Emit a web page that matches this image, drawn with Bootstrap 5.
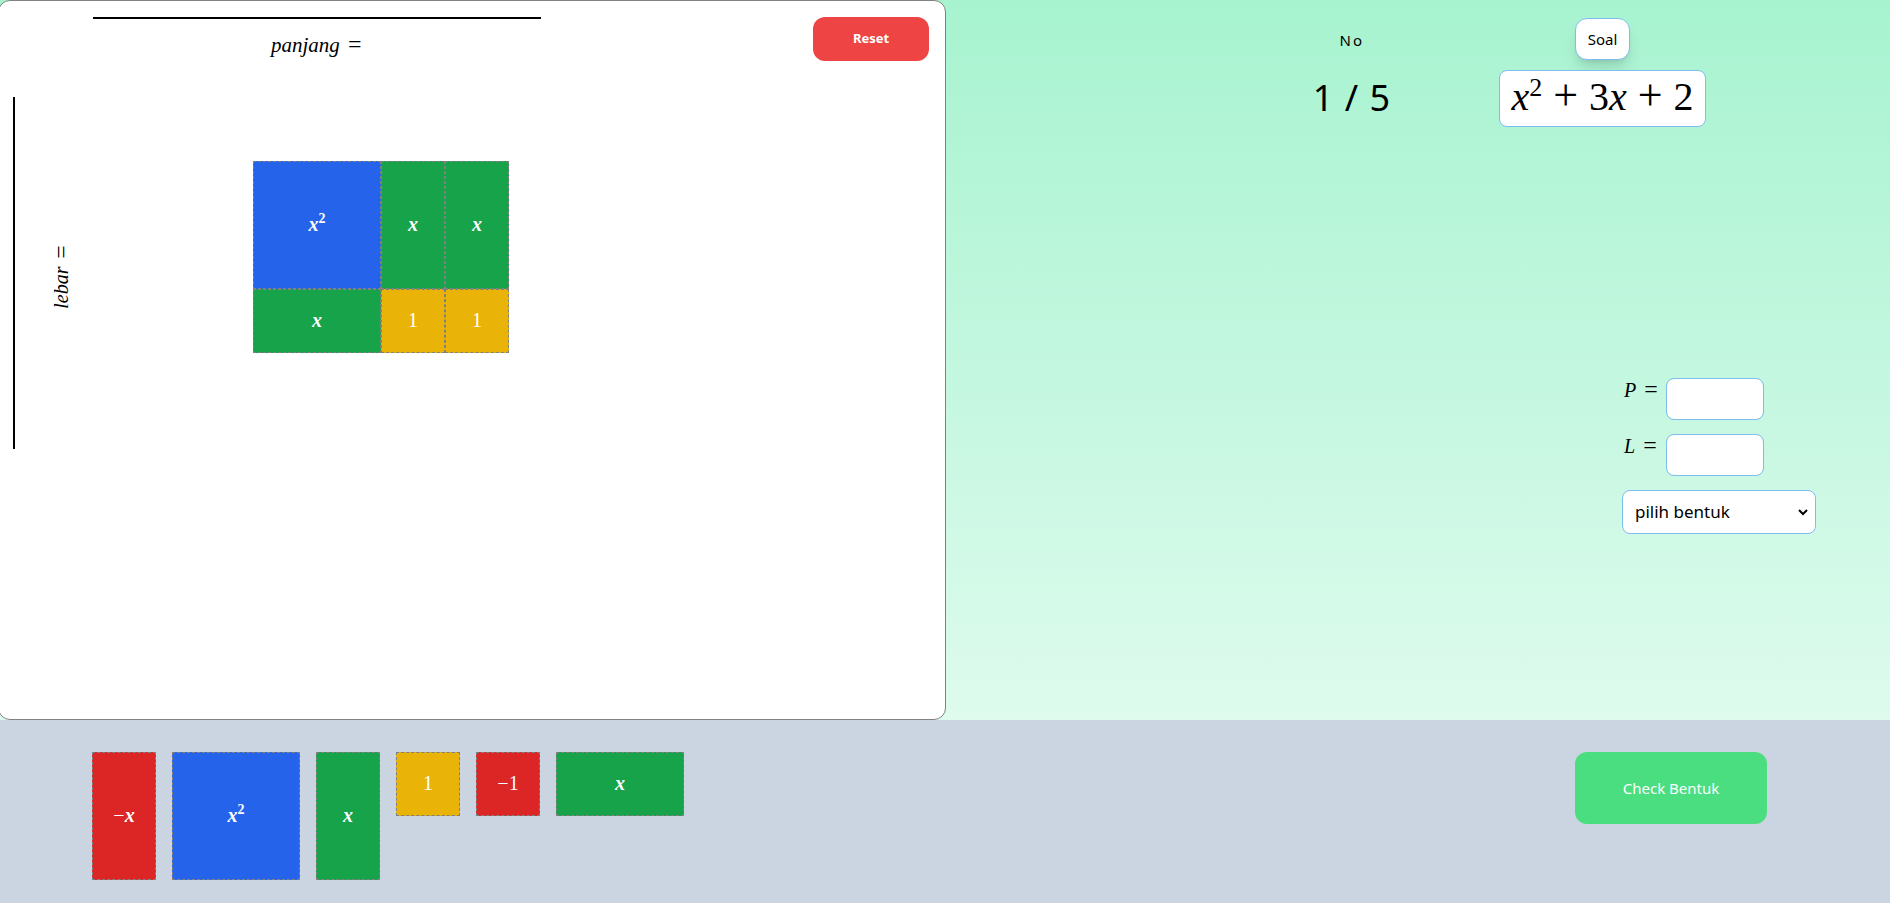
<!DOCTYPE html>
<html lang="id">
<head>
<meta charset="utf-8">
<meta name="viewport" content="width=device-width, initial-scale=1">
<title>Ubin Aljabar</title>
<link href="https://cdn.jsdelivr.net/npm/bootstrap@5.3.0/dist/css/bootstrap.min.css" rel="stylesheet">
<style>
  body { font-family: "Noto Sans", "Open Sans", sans-serif; color: #000; background: linear-gradient(#a7f3d0, #ecfdf5) no-repeat; }
  .formula { font-family: "Liberation Serif", serif; font-size: 20px; line-height: 24px; white-space: nowrap; }
  .formula sup { font-size: 14px; font-style: normal; top: -8px; line-height: 0; }
  .rel { font-size: 24px; line-height: 0; margin-inline-start: 3px; }
  .workspace { flex: 0 0 50%; }
  .board { margin: 0 -1px 0 -2px; border: 1px solid #808080; border-radius: 12px; padding: 16px 16px 16px 17px; }
  .length-line { width: 448px; border-top: 2px solid #000; margin-left: 77px; }
  .length-text { padding-left: 178px; padding-top: 14px; font-size: 21px; }
  .width-line { height: 352px; width: 54px; margin: 36px 0 0 -3px; border-left: 2px solid #000; padding: 8px 0 0 34px; }
  .width-text { writing-mode: vertical-rl; rotate: 180deg; }
  .tile-grid { display: grid; grid-template: 128px 64px / 128px 64px 64px; margin: 100px 0 0 186px; }
  .tile { display: flex; align-items: center; justify-content: center; border: 1px dashed #808080; color: #fff; flex: none; padding: 0 0 2px; }
  .tile i, .tile sup { font-weight: 700; }
  .tall { width: 64px; height: 128px; }
  .big { width: 128px; height: 128px; }
  .unit { width: 64px; height: 64px; }
  .wide { width: 128px; height: 64px; }
  .blue { background: #2563eb; } .green { background: #16a34a; } .gold { background: #eab308; } .red { background: #dc2626; }
  .btn-reset { width: 116px; height: 44px; border: 0; border-radius: 12px; background: #ef4444; color: #fff; font-size: 13px; font-weight: 700; }
  .quiz-head { gap: 108px; padding: 18px 184px 0 0; }
  .counter { letter-spacing: 2px; font-size: 15px; line-height: 24px; padding-top: 10px; }
  .counter-value { font-size: 36px; line-height: 40px; letter-spacing: 1px; margin-top: 26px; }
  .btn-soal { height: 42px; border: 1px solid #7dbdf0; border-radius: 12px; background: #fff; font-size: 15px; padding: 0 12px; box-shadow: 0 10px 15px -3px #0002, 0 4px 6px -4px #0002; }
  .question { border: 1px solid #7dbdf0; border-radius: 8px; background: #fff; width: 207px; height: 57px; margin-top: 10px; font-size: 40px; line-height: 52px; }
  .question sup { font-size: 26px; top: -14px; }
  .question .rel { font-size: 44px; margin: 0 1px; }
  .answers { width: 194px; gap: 14px; margin: 251px 74px 24px 0; }
  .answers .form-control, .answers .form-select { border-color: #7dbdf0; border-radius: 8px; background-color: #fff; color: #000; }
  .answers .form-control { width: 98px; height: 42px; }
  .answers .form-select { height: 44px; font-size: 17px; background-size: 10px; background-position: right 7px center; padding: 0 24px 0 12px;
    background-image: url("data:image/svg+xml,%3csvg xmlns='http://www.w3.org/2000/svg' viewBox='0 0 10 10'%3e%3cpath d='M1 3l4 4 4-4' fill='none' stroke='%23000' stroke-width='2'/%3e%3c/svg%3e"); }
  .answers label { width: 44px; padding-left: 2px; }
  .tray { background: #cbd5e1; padding: 32px 123px 23px 92px; }
  .btn-check-shape { width: 192px; height: 72px; border: 0; border-radius: 12px; background: #4ade80; color: #fff; font-size: 15px; }
</style>
</head>
<body>
<div class="d-flex flex-column min-vh-100">
  <main class="d-flex flex-grow-1">
    <section class="workspace d-flex flex-column">
      <div class="board bg-white flex-grow-1">
        <div class="d-flex justify-content-between align-items-start">
          <div class="length-line"><div class="length-text formula"><i>panjang</i> <span class="rel">=</span></div></div>
          <button type="button" class="btn-reset">Reset</button>
        </div>
        <div class="d-flex">
          <div class="width-line d-flex align-items-center"><div class="width-text formula"><i>lebar</i> <span class="rel">=</span></div></div>
          <div class="tile-grid formula">
            <div class="tile blue"><span><i>x</i><sup>2</sup></span></div>
            <div class="tile green"><i>x</i></div>
            <div class="tile green"><i>x</i></div>
            <div class="tile green"><i>x</i></div>
            <div class="tile gold">1</div>
            <div class="tile gold">1</div>
          </div>
        </div>
      </div>
    </section>
    <section class="flex-grow-1 d-flex flex-column align-items-end">
      <div class="quiz-head d-flex text-center">
        <div class="counter">No<div class="counter-value">1 / 5</div></div>
        <div class="d-flex flex-column align-items-center">
          <button type="button" class="btn-soal">Soal</button>
          <div class="question formula"><i>x</i><sup>2</sup> <span class="rel">+</span> 3<i>x</i> <span class="rel">+</span> 2</div>
        </div>
      </div>
      <form class="answers d-flex flex-column">
        <div class="d-flex"><label class="formula" for="p"><i>P</i> <span class="rel">=</span></label><input id="p" type="text" class="form-control"></div>
        <div class="d-flex"><label class="formula" for="l"><i>L</i> <span class="rel">=</span></label><input id="l" type="text" class="form-control"></div>
        <select class="form-select" aria-label="Bentuk"><option>pilih bentuk</option></select>
      </form>
    </section>
  </main>
  <footer class="tray d-flex justify-content-between align-items-start">
    <div class="d-flex gap-3 align-items-start formula">
      <div class="tile tall red"><span>−<i>x</i></span></div>
      <div class="tile big blue"><span><i>x</i><sup>2</sup></span></div>
      <div class="tile tall green"><i>x</i></div>
      <div class="tile unit gold">1</div>
      <div class="tile unit red">−1</div>
      <div class="tile wide green"><i>x</i></div>
    </div>
    <button type="button" class="btn-check-shape">Check Bentuk</button>
  </footer>
</div>
<script src="https://cdn.jsdelivr.net/npm/bootstrap@5.3.0/dist/js/bootstrap.bundle.min.js"></script>
</body>
</html>
